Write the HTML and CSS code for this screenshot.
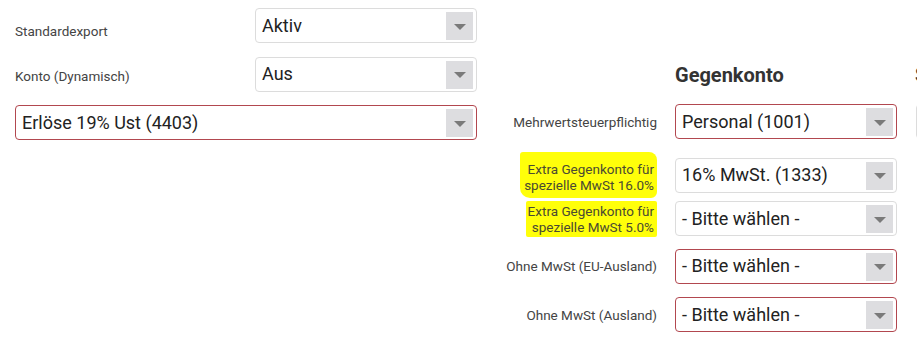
FILE: index.html
```html
<!DOCTYPE html>
<html lang="de">
<head>
<meta charset="utf-8">
<title>Export</title>
<link rel="stylesheet" href="styles.css">
</head>
<body>
<div class="page">
  <div class="col-left">
    <div class="row">
      <span class="lbl lbl-top1">Standardexport</span>
      <div class="select"><span class="val">Aktiv</span><span class="arrow"></span></div>
    </div>
    <div class="row">
      <span class="lbl lbl-top2">Konto (Dynamisch)</span>
      <div class="select"><span class="val">Aus</span><span class="arrow"></span></div>
    </div>
    <div class="row">
      <div class="select select-error select-wide"><span class="val">Erlöse 19% Ust (4403)</span><span class="arrow"></span></div>
    </div>
  </div>
  <div class="col-right">
    <div class="grid-row head-row">
      <span></span>
      <h2 class="heading">Gegenkonto</h2>
      <h2 class="heading third">Steuerschlüssel</h2>
    </div>
    <div class="grid-row">
      <span class="rlbl">Mehrwertsteuerpflichtig</span>
      <div class="select select-error"><span class="val">Personal (1001)</span><span class="arrow"></span></div>
      <div class="select third"><span class="val">19%</span><span class="arrow"></span></div>
    </div>
    <div class="grid-row">
      <span class="rlbl"><span class="mark mark-big">Extra Gegenkonto für<br>spezielle MwSt 16.0%</span></span>
      <div class="select"><span class="val">16% MwSt. (1333)</span><span class="arrow"></span></div>
    </div>
    <div class="grid-row">
      <span class="rlbl"><span class="mark mark-small">Extra Gegenkonto für<br>spezielle MwSt 5.0%</span></span>
      <div class="select"><span class="val">- Bitte wählen -</span><span class="arrow"></span></div>
    </div>
    <div class="grid-row">
      <span class="rlbl">Ohne MwSt (EU-Ausland)</span>
      <div class="select select-error"><span class="val">- Bitte wählen -</span><span class="arrow"></span></div>
    </div>
    <div class="grid-row">
      <span class="rlbl">Ohne MwSt (Ausland)</span>
      <div class="select select-error"><span class="val">- Bitte wählen -</span><span class="arrow"></span></div>
    </div>
  </div>
</div>
</body>
</html>
```

FILE: styles.css
```css
html, body {
  margin: 0;
  padding: 0;
  overflow: hidden;
  background: #ffffff;
}
body {
  font-family: Roboto, "Liberation Sans", sans-serif;
  color: #222;
  width: 917px;
  height: 361px;
}
.page {
  display: flex;
  align-items: flex-start;
  width: 1200px;
}
.col-left {
  margin-left: 15px;
  width: 462px;
  padding-top: 8px;
  display: flex;
  flex-direction: column;
  gap: 13.5px;
}
.row {
  display: flex;
  align-items: flex-start;
  height: 35px;
}
.lbl {
  width: 240px;
  font-size: 13.5px;
  line-height: 16px;
  color: #444;
}
.lbl-top1 { padding-top: 15px; }
.lbl-top2 { padding-top: 11px; }

.select {
  position: relative;
  box-sizing: border-box;
  width: 222px;
  height: 35px;
  border: 1px solid #dcdcdc;
  border-radius: 4px;
  background: #fff;
  display: flex;
  align-items: center;
  padding-left: 6px;
}
.select-error { border-color: #b2474f; }
.select-wide { width: 462px; }
.val {
  font-size: 18px;
  line-height: 20px;
  color: #222;
  white-space: nowrap;
}
.arrow {
  position: absolute;
  right: 3px;
  top: 3px;
  width: 27px;
  height: 28px;
  background: #dddde0;
  display: flex;
  align-items: center;
  justify-content: center;
}
.arrow::after {
  content: "";
  width: 0;
  height: 0;
  border-left: 6px solid transparent;
  border-right: 6px solid transparent;
  border-top: 6px solid #7a7a7a;
  margin-top: 1px;
}

.col-right {
  margin-left: 20px;
  padding-top: 63px;
  display: flex;
  flex-direction: column;
  gap: 13.25px;
}
.grid-row {
  display: grid;
  grid-template-columns: 160px 222px 222px;
  column-gap: 18px;
  align-items: center;
  height: 35px;
}
.head-row {
  height: 24px;
  align-items: start;
  margin-bottom: 3.75px;
}
.third { margin-left: 1px; }
.heading {
  margin: 0;
  font-size: 20px;
  line-height: 24px;
  font-weight: 700;
  color: #333;
  white-space: nowrap;
}
.rlbl {
  font-size: 13.5px;
  line-height: 16px;
  color: #444;
  text-align: right;
  white-space: nowrap;
}
.mark {
  display: inline-block;
  background: #ffff0a;
  color: #4a4a32;
}
.mark-big {
  padding: 9px 3px 5px 4px;
  margin-left: -5px;
  border-radius: 3px 8px 6px 10px;
}
.mark-small {
  padding: 2px 3px 2px 2px;
  border-radius: 2px;
}
```
